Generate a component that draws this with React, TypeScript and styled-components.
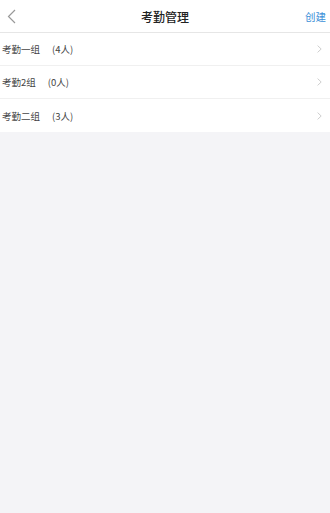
import React from 'react';
import styled, { createGlobalStyle } from 'styled-components';

const GlobalStyle = createGlobalStyle`
  html, body {
    margin: 0;
    padding: 0;
    background: #f4f4f7;
    font-family: "Noto Sans CJK SC", "Noto Sans", sans-serif;
  }
`;

type Group = {
  name: string;
  count: number;
};

const groups: Group[] = [
  { name: '考勤一组', count: 4 },
  { name: '考勤2组', count: 0 },
  { name: '考勤二组', count: 3 },
];

const App = () => {
  return (
    <Page>
      <GlobalStyle />
      <Header>
        <BackButton aria-label='返回'>
          <svg width='9' height='15' viewBox='0 0 9 15'>
            <path d='M8 1 L1.5 7.5 L8 14' fill='none' stroke='#999' strokeWidth='1.2' />
          </svg>
        </BackButton>
        <Title>考勤管理</Title>
        <CreateLink>创建</CreateLink>
      </Header>
      <List>
        {groups.map((g) => (
          <Row key={g.name}>
            <RowText>
              <Name>{g.name}</Name>
              <Count>({g.count}人)</Count>
            </RowText>
            <svg width='5' height='8' viewBox='0 0 5 8'>
              <path d='M0.6 0.6 L4.2 4 L0.6 7.4' fill='none' stroke='#c8c8c8' strokeWidth='0.9' />
            </svg>
          </Row>
        ))}
      </List>
    </Page>
  );
};

const Page = styled.div`
  min-height: 513px;
  background: #f4f4f7;
`;

const Header = styled.div`
  height: 33px;
  display: grid;
  grid-template-columns: 60px 1fr 60px;
  align-items: center;
  background: #fff;
  border-bottom: 1px solid #e6e6e6;
  box-sizing: border-box;
`;

const BackButton = styled.div`
  display: flex;
  align-items: center;
  padding-left: 7px;
  padding-top: 1px;
`;

const Title = styled.div`
  text-align: center;
  font-size: 12px;
  font-weight: 500;
  color: #222;
`;

const CreateLink = styled.div`
  text-align: right;
  padding-right: 4px;
  font-size: 10.5px;
  color: #3b8fd8;
`;

const List = styled.div`
  background: #fff;
`;

const Row = styled.div`
  height: 33px;
  display: flex;
  align-items: center;
  justify-content: space-between;
  padding: 0 8px 0 2px;
  box-sizing: border-box;
  border-bottom: 1px solid #f0f0f0;
  &:last-child {
    border-bottom: none;
  }
`;

const RowText = styled.div`
  display: flex;
  align-items: center;
  gap: 12px;
  font-size: 9.5px;
  color: #444;
`;

const Name = styled.span``;

const Count = styled.span``;

export default App;
